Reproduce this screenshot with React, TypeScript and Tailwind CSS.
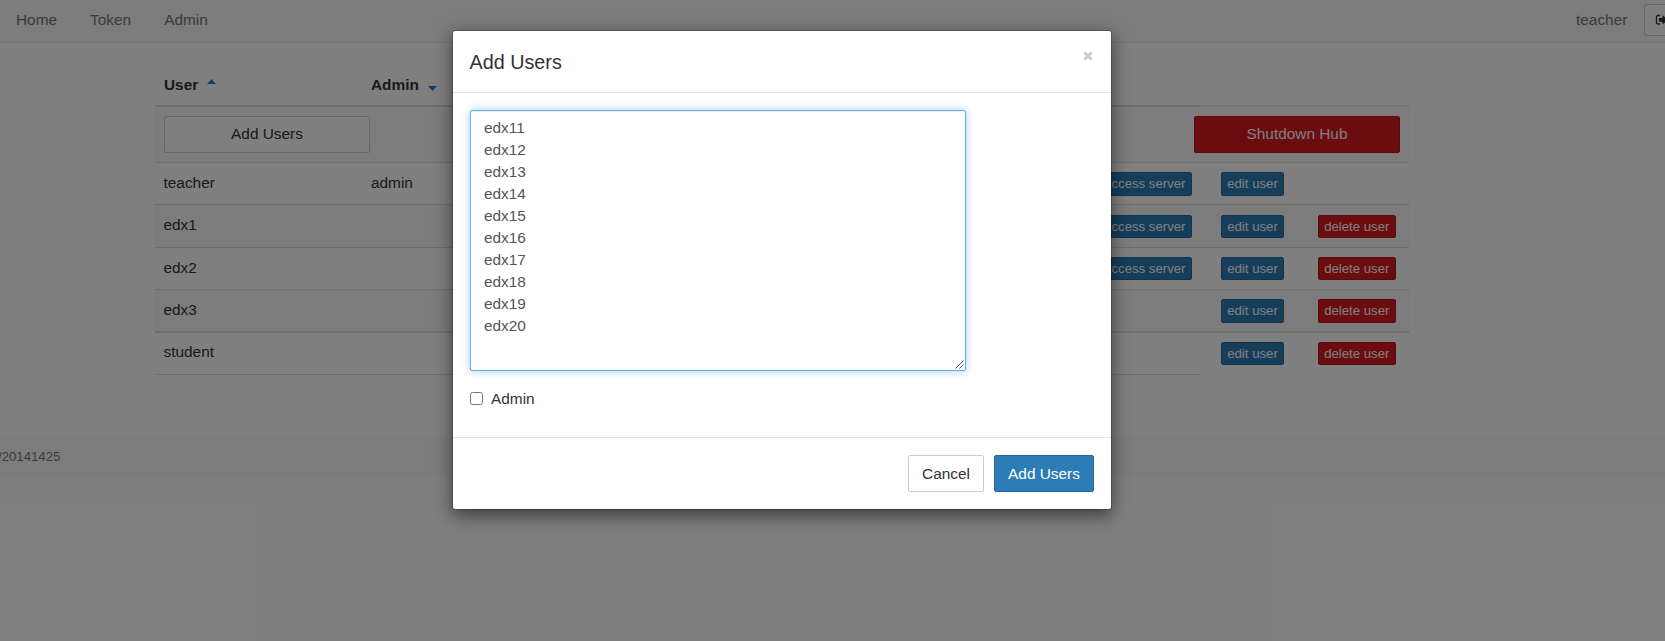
import React from "react";

type User = {
  name: string;
  admin?: boolean;
  server?: boolean;
  removable?: boolean;
  row: string;
  text: string;
  actions: string;
  button: string;
};

const users: User[] = [
  { name: "teacher", admin: true, server: true, row: "h-[42px] bg-white border-t", text: "pt-[9px]", actions: "pt-[9px]", button: "h-6" },
  { name: "edx1", server: true, removable: true, row: "h-[43px] bg-[#f9f9f9] border-t", text: "pt-[9px]", actions: "pt-[10px]", button: "h-[23px]" },
  { name: "edx2", server: true, removable: true, row: "h-[42px] bg-white border-t", text: "pt-[9px]", actions: "pt-[9px]", button: "h-[23px]" },
  { name: "edx3", removable: true, row: "h-[42px] bg-[#f9f9f9] border-t", text: "pt-[9px]", actions: "pt-[9px]", button: "h-6" },
  { name: "student", removable: true, row: "h-[43px] bg-white border-t-2", text: "pt-[8px]", actions: "pt-[9px]", button: "h-[23px]" },
];

const newUsers = Array.from({ length: 10 }, (_, i) => `edx${i + 11}`).join("\n") + "\n";

const columns = "grid grid-cols-[207.5px_837.5px_104.5px_104.5px]";

function SmallButton({ children, danger, size }: { children: string; danger?: boolean; size: string }) {
  return (
    <button
      className={`${size} flex items-center justify-center rounded-[2px] border px-[5.5px] text-[13.2px] leading-[19.8px] whitespace-nowrap text-white ${
        danger ? "border-[#b5171b] bg-[#d6191e]" : "border-[#2a6797] bg-[#2c7cb7]"
      }`}
    >
      {children}
    </button>
  );
}

function Navbar() {
  return (
    <nav className="flex h-[43px] items-start justify-between border-b border-[#e7e7e7] bg-[#f8f8f8] text-[#777]">
      <div className="flex gap-[33px] pt-[9px] pl-[16px]">
        <a>Home</a>
        <a>Token</a>
        <a>Admin</a>
      </div>
      <div className="flex w-[89px] shrink-0">
        <span className="w-[68px] shrink-0 pt-[9px]">teacher</span>
        <button className="mt-1 flex h-8 w-24 shrink-0 items-start rounded-[2px] border border-[#ccc] bg-white pt-[9px] pl-[10px] text-[#333]">
          <svg viewBox="0 0 14 12" className="h-3 w-3.5">
            <path d="M5 1.500H3Q1.500 1.500 1.500 3v5.500Q1.500 10 3 10H5" fill="none" stroke="currentColor" strokeWidth="1.300" />
            <path d="M4 4h3.500V1l5.500 4.800-5.500 4.800V7.800H4z" fill="currentColor" />
          </svg>
        </button>
      </div>
    </nav>
  );
}

function UserTable() {
  return (
    <div className="ml-[155px] w-[1254px]">
      <div className={`${columns} h-[62px] font-bold text-[#333]`}>
        <div className="flex pt-[31px] pl-[9px]">
          User
          <svg viewBox="0 0 9 5" className="mt-[5px] ml-[9px] h-[5px] w-[9px] text-[#337ab7]">
            <path d="M0 5 4.500 0 9 5z" fill="currentColor" />
          </svg>
        </div>
        <div className="flex pt-[31px] pl-[8.500px]">
          Admin
          <svg viewBox="0 0 9 5" className="mt-[12px] ml-[9px] h-[5px] w-[9px] text-[#337ab7]">
            <path d="M0 0h9L4.500 5z" fill="currentColor" />
          </svg>
        </div>
      </div>
      <div className="flex h-[57px] flex-col bg-[#f9f9f9]">
        <div className="flex h-[2px]">
          <div className="h-[2px] w-[1045px] bg-[#ddd]" />
          <div className="h-px grow bg-[#ddd]" />
        </div>
        <div className="flex justify-between px-[9px] pt-[9px]">
          <button className="h-[37px] w-[206px] rounded-[2px] border border-[#ccc] bg-white pb-[2px] text-[#333]">Add Users</button>
          <button className="h-[37px] w-[206px] rounded-[2px] border border-[#b5171b] bg-[#d6191e] pb-[2px] text-white">
            Shutdown Hub
          </button>
        </div>
      </div>
      {users.map((u) => (
        <div key={u.name} className={`${columns} border-[#ddd] text-[#333] ${u.row}`}>
          <div className={`pl-[8.500px] ${u.text}`}>{u.name}</div>
          <div className="flex items-start justify-between pr-2 pl-[8.500px]">
            <span className={u.text}>{u.admin ? "admin" : ""}</span>
            <div className={u.actions}>{u.server && <SmallButton size={u.button}>access server</SmallButton>}</div>
          </div>
          <div className={`flex items-start pl-[21px] ${u.actions}`}>
            <SmallButton size={`w-[63px] ${u.button}`}>edit user</SmallButton>
          </div>
          <div className={`flex items-start justify-center ${u.actions}`}>
            {u.removable && (
              <SmallButton danger size={u.button}>
                delete user
              </SmallButton>
            )}
          </div>
        </div>
      ))}
      <div className="h-px w-[1045px] bg-[#ddd]" />
    </div>
  );
}

function AddUsersDialog() {
  return (
    <div className="absolute inset-0 bg-black/50">
      <div
        role="dialog"
        className="mt-[30px] ml-[452px] flex h-[480px] w-[660px] flex-col rounded-[3px] border border-black/20 bg-white bg-clip-padding text-[#333] shadow-[0_5.5px_16.5px_rgba(0,0,0,0.5)]"
      >
        <div className="flex h-[62px] shrink-0 items-start justify-between border-b border-[#e5e5e5] pr-[18px] pl-[16.500px]">
          <h4 className="pt-[17px] text-[19.8px] leading-[28px]">Add Users</h4>
          <button aria-label="Close" className="mt-[20px] text-[#ccc]">
            <svg viewBox="0 0 10 10" className="h-[10px] w-[10px]">
              <path d="M1.200 1.200l7.600 7.600M8.800 1.200L1.200 8.800" stroke="currentColor" strokeWidth="2.700" />
            </svg>
          </button>
        </div>
        <div className="flex h-[344px] shrink-0 flex-col px-[17px] pt-[17px]">
          <div className="relative h-[261px] w-[496px] shrink-0">
            <textarea
              defaultValue={newUsers}
              spellCheck={false}
              className="block h-full w-full resize-none rounded-[2px] border border-[#66afe9] bg-white px-[13px] pt-[5.6px] pb-[6.6px] leading-[22px] text-[#555] shadow-[inset_0_1px_1px_rgba(0,0,0,0.075),0_0_8.8px_rgba(102,175,233,0.6)] outline-none"
            />
            <svg viewBox="0 0 9 9" className="pointer-events-none absolute right-[2px] bottom-[2px] h-[9px] w-[9px] text-[#555]">
              <path d="M.5 8.500l8-8M4.500 8.500l4-4" fill="none" stroke="currentColor" strokeWidth="1" />
            </svg>
          </div>
          <label className="mt-[17px] flex items-start gap-2">
            <input type="checkbox" className="mt-[4px] h-[13px] w-[13px]" />
            Admin
          </label>
        </div>
        <div className="flex grow items-start justify-end gap-[10px] border-t border-[#e5e5e5] pt-[17px] pr-[17px]">
          <button className="h-[37px] w-[76px] rounded-[2px] border border-[#ccc] bg-white">Cancel</button>
          <button className="h-[37px] w-[100px] rounded-[2px] border border-[#2a6797] bg-[#2c7cb7] text-white">Add Users</button>
        </div>
      </div>
    </div>
  );
}

export default function App() {
  return (
    <div className="relative h-[641px] w-full overflow-hidden bg-white font-['Liberation_Sans',Arial,sans-serif] text-[15.4px] leading-[22px]">
      <Navbar />
      <UserTable />
      <footer className="mt-[62px] h-10 bg-[#f8f8f8] pt-[10px] text-[13.2px] leading-[20px] text-[#777]">
        <span className="-ml-[2px]">/20141425</span>
      </footer>
      <AddUsersDialog />
    </div>
  );
}
